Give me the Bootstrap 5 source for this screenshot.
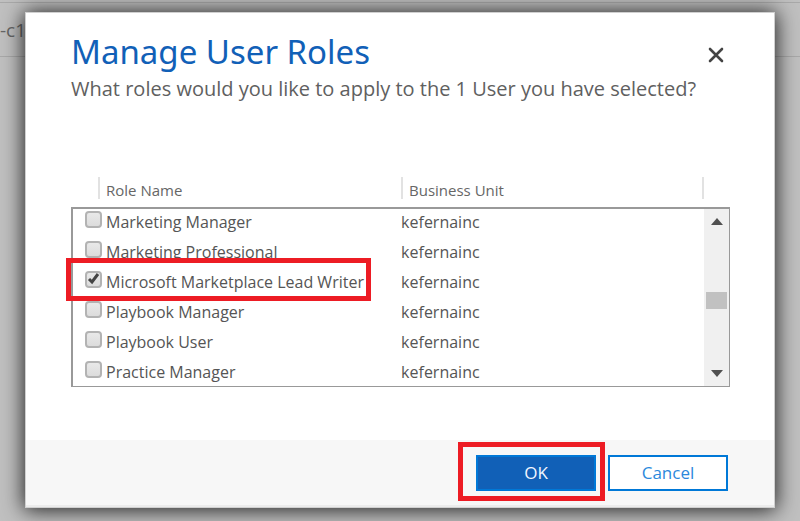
<!DOCTYPE html>
<html lang="en">
<head>
<meta charset="utf-8">
<meta name="viewport" content="width=device-width, initial-scale=1">
<title>Manage User Roles</title>
<link href="https://cdn.jsdelivr.net/npm/bootstrap@5.3.0/dist/css/bootstrap.min.css" rel="stylesheet">
<style>
body{background:#c0c0c0;font-family:"Open Sans","Noto Sans",sans-serif;color:#555;overflow-x:hidden}
.backdrop-page{position:absolute;inset:2px 0 auto 0;height:55px;border-top:1px solid #a9a9a9;border-bottom:1px solid #a9a9a9;font-size:19px;line-height:55px;color:#666}
.dialog-wrap{padding:12px 25px 14px}
.dialog-box{position:relative;background:#fff;border:1px solid #d0d0d0;box-shadow:0 1px 20px 1px rgba(0,0,0,.85)}
.dialog-head{padding:16px 45px 0}
.dialog-title{font-family:"Noto Sans","Open Sans",sans-serif;font-size:33px;line-height:45px;color:#1160b7;font-weight:400}
.dialog-sub{font-size:20px;line-height:30px;color:#606060}
.close-x{margin:16px 4px 0 0;width:18px;height:20px;line-height:0}
.roles{padding:73px 44px 0 45px}
.role-headings{padding-left:27px;padding-right:26px;height:22px;margin-bottom:8px;font-size:15px;line-height:26px;color:#666}
.role-headings>div{border-left:2px solid #e2e2e2;padding-left:6px}
.role-headings>div:first-child{width:50%}
.role-headings>div:last-child{border-right:2px solid #e2e2e2;flex:1}
.role-list{border:2px solid #999;border-right-width:1px;border-bottom-width:1px;height:180px}
.role-table{margin-top:-2px;font-size:16px;line-height:30px;color:#555}
.role-table td{height:30px;padding:0}
.role-table td:first-child{width:52%;padding-left:12px}
.role-cell{position:relative}
.role-check{appearance:none;width:17px;height:17px;margin:0 4px 5px 0;border:2px solid #b3b3b3;border-radius:4px;background:linear-gradient(#e9e9e9,#dcdcdc)}
.tick{position:absolute;left:2px;top:5px;pointer-events:none}
.row-frame{position:absolute;inset:-9px auto -4px -19px;width:305px;border:5px solid #ed1c24;pointer-events:none;z-index:2}
.scroll-track{width:25px;background:#f0f0f0;padding:9px 2px}
.scroll-track button{line-height:0}
.thumb{height:17px;background:#c1c1c1;margin-top:67px;margin-bottom:auto}
.dialog-foot{background:#f7f7f7;margin-top:53px;padding:15px 46px 14px;gap:12px;border-bottom:2px solid #ececec}
.dialog-foot .btn{width:120px;height:36px;padding:0;border:2px solid #0078d7;border-radius:0;font-size:17px;line-height:32px}
.btn-confirm,.btn-confirm:hover{background:#1160b7;color:#f1f6ff}
.btn-dismiss,.btn-dismiss:hover{background:#fff;color:#2b88dc}
.ok-frame{position:absolute;inset:-13px -9px -10px -18px;border:5px solid #ed1c24;pointer-events:none}
</style>
<script src="https://cdn.jsdelivr.net/npm/bootstrap@5.3.0/dist/js/bootstrap.bundle.min.js"></script>
</head>
<body>
<div class="backdrop-page">-c1</div>
<main class="dialog-wrap">
<section class="dialog-box" role="dialog" aria-labelledby="dialogTitle">
  <header class="dialog-head d-flex justify-content-between align-items-start">
    <div>
      <h1 class="dialog-title m-0" id="dialogTitle">Manage User Roles</h1>
      <p class="dialog-sub m-0 text-nowrap">What roles would you like to apply to the 1 User you have selected?</p>
    </div>
    <button class="close-x btn p-0 border-0" type="button" aria-label="Close">
      <svg width="16" height="16" viewBox="0 0 16 16"><path d="M2 2 14 14M14 2 2 14" stroke="#444" stroke-width="2.6" stroke-linecap="round"/></svg>
    </button>
  </header>
  <div class="roles">
    <div class="role-headings d-flex"><div>Role Name</div><div>Business Unit</div></div>
    <div class="role-list d-flex">
      <div class="flex-grow-1">
        <table class="role-table w-100">
          <tbody>
            <tr><td><div class="role-cell d-flex align-items-center"><input class="role-check" type="checkbox" id="r1"><label for="r1">Marketing Manager</label></div></td><td>kefernainc</td></tr>
            <tr><td><div class="role-cell d-flex align-items-center"><input class="role-check" type="checkbox" id="r2"><label for="r2">Marketing Professional</label></div></td><td>kefernainc</td></tr>
            <tr><td><div class="role-cell d-flex align-items-center"><input class="role-check" type="checkbox" id="r3" checked><label for="r3">Microsoft Marketplace Lead Writer</label><svg class="tick" width="13" height="13" viewBox="0 0 13 13"><path d="M2 7 5 10 11 2" fill="none" stroke="#444" stroke-width="3"/></svg><span class="row-frame"></span></div></td><td>kefernainc</td></tr>
            <tr><td><div class="role-cell d-flex align-items-center"><input class="role-check" type="checkbox" id="r4"><label for="r4">Playbook Manager</label></div></td><td>kefernainc</td></tr>
            <tr><td><div class="role-cell d-flex align-items-center"><input class="role-check" type="checkbox" id="r5"><label for="r5">Playbook User</label></div></td><td>kefernainc</td></tr>
            <tr><td><div class="role-cell d-flex align-items-center"><input class="role-check" type="checkbox" id="r6"><label for="r6">Practice Manager</label></div></td><td>kefernainc</td></tr>
          </tbody>
        </table>
      </div>
      <div class="scroll-track d-flex flex-column">
        <button class="btn p-0 border-0" type="button" aria-label="Scroll up"><svg width="12" height="7" viewBox="0 0 12 7"><path d="M0 7 6 0 12 7z" fill="#505050"/></svg></button>
        <div class="thumb"></div>
        <button class="btn p-0 border-0" type="button" aria-label="Scroll down"><svg width="12" height="7" viewBox="0 0 12 7"><path d="M0 0 6 7 12 0z" fill="#505050"/></svg></button>
      </div>
    </div>
  </div>
  <footer class="dialog-foot d-flex justify-content-end">
    <div class="position-relative"><button class="btn btn-confirm" type="button">OK</button><span class="ok-frame"></span></div>
    <button class="btn btn-dismiss" type="button">Cancel</button>
  </footer>
</section>
</main>
</body>
</html>
